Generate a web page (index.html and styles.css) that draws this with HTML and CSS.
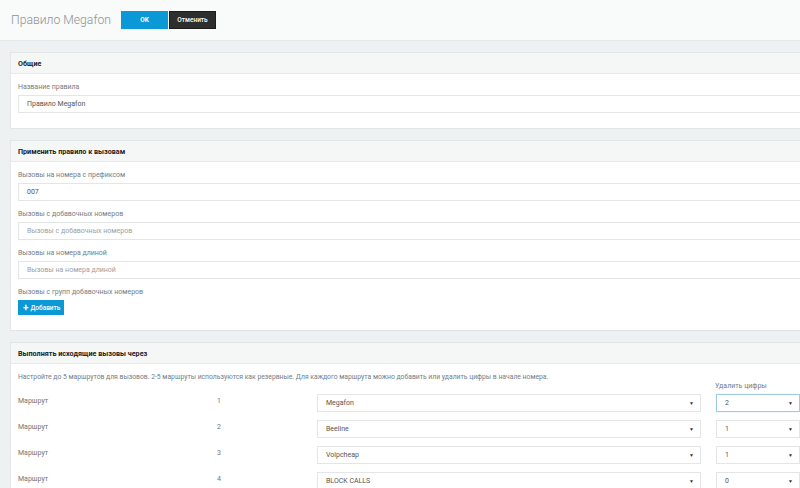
FILE: index.html
```html
<!DOCTYPE html>
<html lang="ru">
<head>
<meta charset="utf-8">
<title>Правило Megafon</title>
<link rel="stylesheet" href="styles.css">
</head>
<body>
<header class="topbar">
  <h1 class="title">Правило Megafon</h1>
  <div class="actions">
    <button class="btn btn-primary">OK</button>
    <button class="btn btn-dark">Отменить</button>
  </div>
</header>
<main class="content">
  <section class="panel">
    <div class="panel-head">Общие</div>
    <div class="panel-body">
      <div class="field">
        <label class="label">Название правила</label>
        <div class="input">Правило Megafon</div>
      </div>
    </div>
  </section>

  <section class="panel">
    <div class="panel-head">Применить правило к вызовам</div>
    <div class="panel-body">
      <div class="field">
        <label class="label">Вызовы на номера с префиксом</label>
        <div class="input">007</div>
      </div>
      <div class="field">
        <label class="label">Вызовы с добавочных номеров</label>
        <div class="input placeholder">Вызовы с добавочных номеров</div>
      </div>
      <div class="field">
        <label class="label">Вызовы на номера длиной</label>
        <div class="input placeholder">Вызовы на номера длиной</div>
      </div>
      <div class="field">
        <label class="label">Вызовы с групп добавочных номеров</label>
        <button class="btn-add"><span class="plus">+</span>Добавить</button>
      </div>
    </div>
  </section>

  <section class="panel">
    <div class="panel-head">Выполнять исходящие вызовы через</div>
    <div class="panel-body">
      <p class="desc">Настройте до 5 маршрутов для вызовов. 2-5 маршруты используются как резервные. Для каждого маршрута можно добавить или удалить цифры в начале номера.</p>
      <div class="routes">
        <div class="route-head">
          <span class="col-digits-head">Удалить цифры</span>
        </div>
        <div class="route">
          <span class="r-label">Маршрут</span>
          <span class="r-num">1</span>
          <div class="select wide">Megafon</div>
          <div class="select small focus">2</div>
        </div>
        <div class="route">
          <span class="r-label">Маршрут</span>
          <span class="r-num">2</span>
          <div class="select wide">Beeline</div>
          <div class="select small">1</div>
        </div>
        <div class="route">
          <span class="r-label">Маршрут</span>
          <span class="r-num">3</span>
          <div class="select wide">Voipcheap</div>
          <div class="select small">1</div>
        </div>
        <div class="route">
          <span class="r-label">Маршрут</span>
          <span class="r-num">4</span>
          <div class="select wide">BLOCK CALLS</div>
          <div class="select small">0</div>
        </div>
      </div>
    </div>
  </section>
</main>
</body>
</html>
```
FILE: styles.css
```css
html, body {
  margin: 0;
  padding: 0;
  overflow: hidden;
}
body {
  width: 800px;
  height: 488px;
  background: #eef1f1;
  font-family: "Roboto", "Noto Sans", sans-serif;
  color: #555;
}
.topbar {
  height: 40px;
  background: #f9fafa;
  border-bottom: 1px solid #e6e9e9;
  display: flex;
  align-items: center;
  padding-left: 11px;
}
.title {
  flex: 0 0 110px;
  margin: 0;
  font-size: 12.2px;
  font-weight: 300;
  color: #8d9296;
  white-space: nowrap;
}
.actions {
  display: flex;
  gap: 1px;
}
.btn {
  width: 47px;
  height: 18px;
  border: 0;
  padding: 0;
  font-family: inherit;
  font-size: 6.5px;
  font-weight: 700;
  color: #fff;
}
.btn-primary {
  background: #0a98d6;
}
.btn-dark {
  background: #2e2e2e;
  border: 1px solid #1c1c1c;
  font-weight: 500;
}
.content {
  width: 830px;
  padding: 11px 0 0 10px;
  display: flex;
  flex-direction: column;
  gap: 11px;
}
.panel {
  background: #fff;
  border: 1px solid #e2e6e6;
}
.panel-head {
  height: 20px;
  background: #f5f7f7;
  border-bottom: 1px solid #e8ebeb;
  padding-left: 7px;
  display: flex;
  align-items: center;
  font-size: 7.2px;
  font-weight: 700;
  color: #222;
}
.panel-body {
  padding: 7px 7px 15px;
}
.field + .field {
  margin-top: 7px;
}
.label {
  display: block;
  font-size: 7px;
  line-height: 12px;
  color: #737d86;
  margin-bottom: 2px;
}
.input {
  box-sizing: border-box;
  height: 18px;
  border: 1px solid #e2e6e6;
  padding: 0 8px;
  display: flex;
  align-items: center;
  font-size: 7px;
  color: #555;
}
.input.placeholder {
  color: #9a9fa4;
}
.btn-add {
  display: flex;
  align-items: center;
  gap: 2px;
  width: 46px;
  height: 15px;
  border: 0;
  padding: 0 0 0 5px;
  background: #0a98d6;
  color: #fff;
  font-family: inherit;
  font-size: 6.5px;
  font-weight: 500;
}
.plus {
  font-size: 10px;
  font-weight: 700;
  line-height: 1;
}
.desc {
  margin: 0;
  font-size: 6.8px;
  line-height: 12px;
  color: #737d86;
}
.routes {
  display: flex;
  flex-direction: column;
}
.route-head {
  height: 12px;
  margin-top: -3px;
  margin-bottom: 2px;
  padding-left: 697px;
  font-size: 7px;
  line-height: 12px;
  color: #737d86;
}
.route {
  display: flex;
  align-items: flex-start;
  margin-bottom: 8px;
}
.r-label {
  width: 199px;
  padding-top: 1px;
  font-size: 7px;
  line-height: 12px;
  color: #6f757a;
}
.r-num {
  width: 100px;
  padding-top: 1px;
  font-size: 7px;
  line-height: 12px;
  color: #6f757a;
}
.select {
  position: relative;
  box-sizing: border-box;
  height: 18px;
  border: 1px solid #e2e6e6;
  padding: 0 8px;
  display: flex;
  align-items: center;
  font-size: 7px;
  color: #555;
  background: #fff;
}
.select::after {
  content: "\25BC";
  position: absolute;
  right: 6px;
  top: 50%;
  transform: translateY(-50%);
  font-size: 5px;
  color: #333;
}
.select.wide {
  width: 384px;
}
.select.small {
  width: 84px;
  margin-left: 15px;
}
.select.focus {
  border-color: #9fcbe3;
  box-shadow: 0 0 1px #b9dbee;
}
```
